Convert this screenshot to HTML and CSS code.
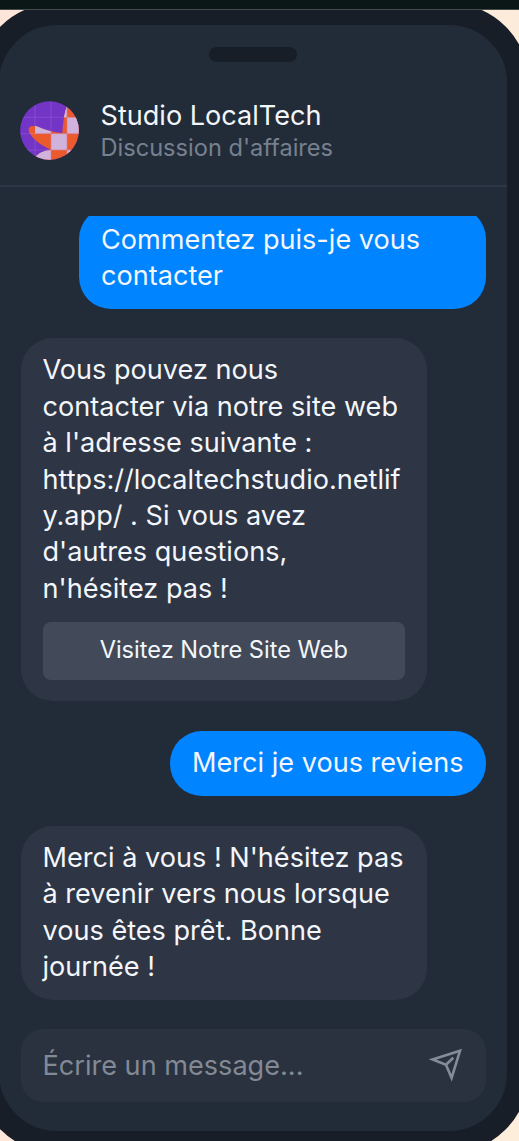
FILE: index.html
```html
<!DOCTYPE html>
<html lang="fr">
<head>
<meta charset="utf-8">
<title>Studio LocalTech</title>
<link rel="stylesheet" href="styles.css">
</head>
<body>
<div class="topbar"></div>
<div class="scene">
  <main class="phone">
    <div class="notch"></div>
    <header class="header">
      <svg class="avatar" viewBox="30 33 177 177">
        <defs>
          <clipPath id="disc"><circle cx="118.5" cy="121.5" r="88"/></clipPath>
          <clipPath id="shape"><path d="M172 45L220 45V220H66Q76 184 122 179Q72 157 57 126Q50 104 80 109Q117 126 157 129Q159 80 172 45Z"/></clipPath>
        </defs>
        <g clip-path="url(#disc)">
          <path fill="#7335c5" d="M30 33h177v177H30z"/>
          <path stroke="#8b4ad0" stroke-width="2.5" d="M75 33v177M123 33v177M171 33v177M30 82h177M30 131h177M30 180h177"/>
          <g clip-path="url(#shape)">
            <path fill="#ea5a2c" d="M30 33h177v177H30z"/>
            <path fill="#d0b3dc" d="M75 82h48v49H75zM123 131h48v49h-48zM171 82h48v49h-48zM123 33h48v49h-48zM123 82h48v0h-48zM75 180h48v49H75zM171 180h48v49h-48z"/>
            <path fill="#d0b3dc" d="M155 82L168 52L171 58V82Z"/>
            <path stroke="#dc7c88" stroke-width="2" d="M123 82v128M171 33v177M50 131h160M50 180h160M171 82h40"/>
          </g>
        </g>
      </svg>
      <div class="identity">
        <div class="name">Studio LocalTech</div>
        <div class="subtitle">Discussion d'affaires</div>
      </div>
    </header>
    <section class="messages">
      <div class="bubble sent clipped">Commentez puis-je vous<br>contacter</div>
      <div class="bubble received">
        Vous pouvez nous<br>contacter via notre site web<br>à l'adresse suivante :<br>https://localtechstudio.netlif<br>y.app/ . Si vous avez<br>d'autres questions,<br>n'hésitez pas !
        <div class="action">Visitez Notre Site Web</div>
      </div>
      <div class="bubble sent">Merci je vous reviens</div>
      <div class="bubble received">Merci à vous ! N'hésitez pas<br>à revenir vers nous lorsque<br>vous êtes prêt. Bonne<br>journée !</div>
    </section>
    <div class="composer">
      <span>Écrire un message...</span>
      <svg class="send" viewBox="0 0 36 36" fill="none" stroke="#858c99" stroke-width="2.6"><path d="M5.5 12.5L33 3.8L24.6 31L19 17.8ZM19 17.800L26.300 10.800"/></svg>
    </div>
  </main>
</div>
</body>
</html>
```

FILE: styles.css
```css
* { box-sizing: border-box; }
body {
  margin: 0;
  height: 1141px;
  overflow: hidden;
  font-family: Inter, "Liberation Sans", sans-serif;
  color: #f3f6fa;
}
.topbar {
  height: 10px;
  background: #0b1617;
  border-bottom: 1px solid #444b4a;
}
.scene {
  height: 1131px;
  overflow: hidden;
  background: linear-gradient(100deg, #fde5da, #fdeedb);
}
.phone {
  display: flex;
  flex-direction: column;
  width: 552px;
  height: 1150px;
  margin: -7px 0 0 -23px;
  border: 22px solid #181e28;
  border-radius: 80px;
  background: #222c38;
}
.notch {
  flex: none;
  width: 88px;
  height: 15px;
  margin: 22px auto 0;
  border-radius: 8px;
  background: #181e28;
}
.header {
  display: flex;
  flex: none;
  gap: 22px;
  height: 125px;
  padding: 39px 21px 0;
  border-bottom: 2px solid #2d3646;
}
.avatar { width: 59px; height: 59px; }
.name { font-size: 27.1px; line-height: 33px; margin: -2px 0 0 -0.5px; }
.subtitle { margin: 1px 0 0 -0.5px; font-size: 23.6px; line-height: 29px; color: #77808f; }
.messages {
  display: flex;
  flex-direction: column;
  flex: none;
  gap: 29.5px;
  height: 785px;
  margin: 29px 21.5px 0;
  overflow: hidden;
}
.bubble {
  flex: none;
  max-width: 406.5px;
  padding: 14.5px 22px;
  border-radius: 32px;
  font-size: 27.1px;
  line-height: 36.4px;
  white-space: nowrap;
}
.sent { align-self: flex-end; background: #0084ff; }
.received { align-self: flex-start; width: 406.5px; background: #2e3545; }
.clipped { width: 406.5px; margin: -9px 0 -0.5px; }
.action {
  height: 58px;
  margin: 14.5px 0 7px;
  border-radius: 8px;
  background: #424a59;
  font-size: 23.6px;
  line-height: 56px;
  text-align: center;
}
.composer {
  display: flex;
  flex: none;
  align-items: center;
  justify-content: space-between;
  height: 73px;
  margin: 28px 21.5px 0;
  padding: 0 22.5px 1px 22px;
  border-radius: 22px;
  background: #29323e;
  color: #838995;
  font-size: 27.1px;
}
.send { width: 36px; height: 36px; }
```
